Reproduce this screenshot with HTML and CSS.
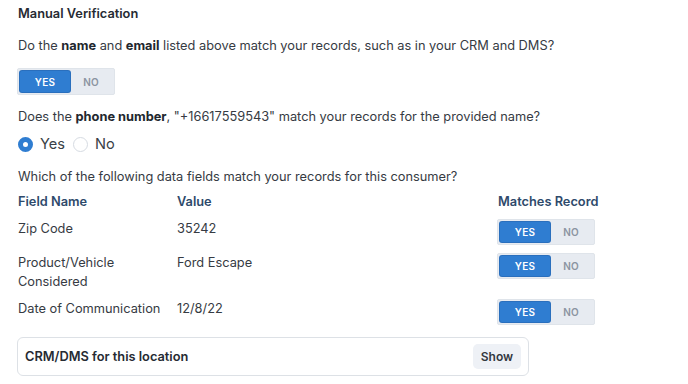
FILE: index.html
```html
<!DOCTYPE html>
<html>
<head>
<meta charset="utf-8">
<link rel="stylesheet" href="styles.css">
</head>
<body>
<div class="page">
  <div class="title">Manual Verification</div>
  <p class="q q1">Do the <b>name</b> and <b>email</b> listed above match your records, such as in your CRM and DMS?</p>
  <div class="toggle toggle-main">
    <span class="opt on">YES</span><span class="opt">NO</span>
  </div>
  <p class="q q2">Does the <b>phone number</b>, "+16617559543" match your records for the provided name?</p>
  <div class="radios">
    <label class="radio"><span class="dot checked"></span><span>Yes</span></label>
    <label class="radio"><span class="dot"></span><span>No</span></label>
  </div>
  <p class="q q3">Which of the following data fields match your records for this consumer?</p>
  <div class="table">
    <div class="th">Field Name</div>
    <div class="th">Value</div>
    <div class="th">Matches Record</div>

    <div class="td">Zip Code</div>
    <div class="td">35242</div>
    <div class="toggle"><span class="opt on">YES</span><span class="opt">NO</span></div>

    <div class="td">Product/Vehicle<br>Considered</div>
    <div class="td">Ford Escape</div>
    <div class="toggle"><span class="opt on">YES</span><span class="opt">NO</span></div>

    <div class="td">Date of Communication</div>
    <div class="td">12/8/22</div>
    <div class="toggle"><span class="opt on">YES</span><span class="opt">NO</span></div>
  </div>
  <div class="box">
    <span class="box-title">CRM/DMS for this location</span>
    <button class="show">Show</button>
  </div>
</div>
</body>
</html>
```
FILE: styles.css
```css
html, body {
  margin: 0;
  padding: 0;
  background: #ffffff;
}
body {
  font-family: Inter, "Noto Sans", sans-serif;
  font-size: 12.8px;
  color: #363b43;
}
.page {
  padding: 4px 18px 0 18px;
}
.title {
  font-weight: 600;
  line-height: 20px;
  color: #262b33;
}
.q {
  margin: 12px 0 0 0;
  line-height: 20px;
}
.q b {
  font-weight: 700;
  color: #22272e;
}
.q2 { margin-top: 12px; }
.q3 { margin-top: 13px; }
.toggle {
  display: inline-flex;
  box-sizing: border-box;
  width: 98px;
  height: 26px;
  padding: 2px;
  background: #e7ebf1;
  border: 1px solid #dfe4ea;
  border-radius: 2px;
}
.toggle-main {
  margin: 12px 0 0 -1px;
  height: 27px;
}
.opt {
  flex: 1;
  display: flex;
  align-items: center;
  justify-content: center;
  font-size: 10px;
  font-weight: 600;
  color: #8b94a1;
  letter-spacing: 0.2px;
}
.opt.on {
  flex: 0 0 50px;
  background: #2f7dd1;
  color: #ffffff;
  border-radius: 2px;
  box-shadow: 0 0 0 1px #2a6fbd;
}
.radios {
  display: flex;
  gap: 8px;
  margin-top: 7px;
  height: 20px;
  align-items: center;
}
.radio {
  display: flex;
  align-items: center;
  gap: 7px;
  font-size: 14.6px;
  color: #3a3f47;
}
.dot {
  box-sizing: border-box;
  width: 15px;
  height: 15px;
  border-radius: 50%;
  border: 1px solid #d6dbe2;
  background: #fff;
}
.dot.checked {
  border: 5px solid #2f7dd1;
  background: #fff;
}
.table {
  display: grid;
  grid-template-columns: 159px 321px auto;
  row-gap: 8px;
  margin-top: 5px;
}
.th {
  font-weight: 600;
  color: #2e4a6b;
  line-height: 19px;
}
.td {
  line-height: 19px;
}
.table .toggle {
  margin-left: -1px;
}
.box {
  display: flex;
  align-items: center;
  justify-content: space-between;
  box-sizing: border-box;
  width: 512px;
  height: 39px;
  margin: 12px 0 0 -1px;
  padding: 0 7px;
  border: 1px solid #dde1e6;
  border-radius: 6px;
}
.box-title {
  font-weight: 600;
  color: #262b33;
}
.show {
  font-family: Inter, "Noto Sans", sans-serif;
  font-size: 12px;
  font-weight: 600;
  color: #333840;
  background: #eef1f6;
  border: none;
  border-radius: 5px;
  width: 48px;
  height: 25px;
  padding: 0;
}
```
